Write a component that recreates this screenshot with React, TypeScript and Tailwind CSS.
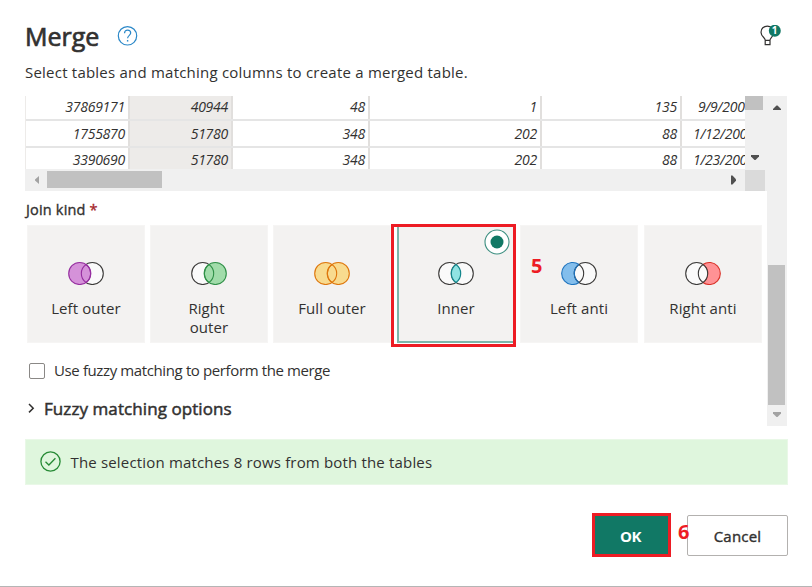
import React from "react";

type Kind = "left" | "right" | "full" | "inner" | "leftAnti" | "rightAnti";

const LENS = "M18 3.5 A11 11 0 0 1 18 21.5 A11 11 0 0 1 18 3.5 Z";
const LEFT_MOON = "M18 3.5 A11 11 0 1 0 18 21.5 A11 11 0 0 1 18 3.5 Z";
const RIGHT_MOON = "M18 3.5 A11 11 0 1 1 18 21.5 A11 11 0 0 0 18 3.5 Z";

function Ring({ x, fill, stroke }: { x: number; fill: string; stroke: string }) {
  return <circle cx={x} cy="12.5" r="11" fill={fill} stroke={stroke} strokeWidth="1.1" />;
}

function Venn({ kind }: { kind: Kind }) {
  const dark = "#3b3a39";
  const paper = "#fafafa";
  const a = 11.7;
  const b = 24.3;
  return (
    <svg width="37" height="24" viewBox="0 0 37 24" className="block">
      {kind === "left" && (
        <>
          <Ring x={b} fill={paper} stroke={dark} />
          <Ring x={a} fill="#d592d9" stroke="#962fa0" />
          <path d={LENS} fill="none" stroke="#962fa0" strokeWidth="1.1" />
        </>
      )}
      {kind === "right" && (
        <>
          <Ring x={a} fill={paper} stroke={dark} />
          <Ring x={b} fill="#a1dcaa" stroke="#309048" />
          <path d={LENS} fill="none" stroke="#309048" strokeWidth="1.1" />
        </>
      )}
      {kind === "full" && (
        <>
          <Ring x={a} fill="#f8db8f" stroke="#de770d" />
          <Ring x={b} fill="#f8db8f" stroke="#de770d" />
          <path d={LENS} fill="none" stroke="#de770d" strokeWidth="1.1" />
        </>
      )}
      {kind === "inner" && (
        <>
          <Ring x={a} fill={paper} stroke={dark} />
          <Ring x={b} fill={paper} stroke={dark} />
          <path d={LENS} fill="#90e3e2" stroke="#12868c" strokeWidth="1.2" />
        </>
      )}
      {kind === "leftAnti" && (
        <>
          <Ring x={b} fill={paper} stroke={dark} />
          <path d={LEFT_MOON} fill="#83beec" stroke="#1e74bf" strokeWidth="1.1" />
          <path d={LENS} fill={paper} stroke={dark} strokeWidth="1.1" />
          <path d="M18 3.5 A11 11 0 0 0 18 21.5" fill="none" stroke="#1e74bf" strokeWidth="1.1" />
        </>
      )}
      {kind === "rightAnti" && (
        <>
          <Ring x={a} fill={paper} stroke={dark} />
          <path d={RIGHT_MOON} fill="#ff9295" stroke="#d93027" strokeWidth="1.1" />
          <path d={LENS} fill={paper} stroke={dark} strokeWidth="1.1" />
        </>
      )}
    </svg>
  );
}

const COLS = "grid grid-cols-[104px_103px_137px_172px_140px_92px]";

const ROWS = [
  ["37869171", "40944", "48", "1", "135", "9/9/200"],
  ["1755870", "51780", "348", "202", "88", "1/12/200"],
  ["3390690", "51780", "348", "202", "88", "1/23/200"],
];

function PreviewTable() {
  return (
    <div className="h-[95px] w-[742px] shrink-0">
      <div className="flex h-[73px]">
        <div className="h-[73px] w-[720px] overflow-hidden border-l border-[#edebe9]">
          {ROWS.map((row, r) => (
            <div
              key={r}
              className={`${COLS} ${r === 0 ? "h-[25px]" : "h-[27px]"} border-b-2 border-[#e5e5e5] text-[14px] tracking-[-0.25px] italic leading-[22px]`}
            >
              {row.map((cell, c) => (
                <div
                  key={c}
                  className={
                    c === 5
                      ? `whitespace-nowrap ${r === 0 ? "pl-[16px]" : r === 1 ? "pl-[11px] pt-[2px]" : "pl-[11px] pt-px"}`
                      : `border-r-2 border-[#e1dfdd] pr-[3px] text-right ${r === 0 ? "" : r === 1 ? "pt-[2px]" : "pt-px"} ${c === 1 ? "bg-[#edebe9]" : ""}`
                  }
                >
                  {cell}
                </div>
              ))}
            </div>
          ))}
        </div>
        <div className="flex h-[73px] w-[22px] flex-col items-start justify-between bg-[#f0f0f0]">
          <div className="h-[14px] w-[18px] bg-[#c1c1c1]" />
          <svg width="20" height="22" viewBox="0 0 20 22">
            <path d="M6 8H14V9.5L10.5 13H9.5L6 9.5Z" fill="#505050" />
          </svg>
        </div>
      </div>
      <div className="flex h-[22px] items-center bg-[#f0f0f0]">
        <svg width="22" height="22" viewBox="0 0 22 22">
          <path d="M14 7V15L10 11.5V10.5Z" fill="#a3a3a3" />
        </svg>
        <div className="mb-px h-[17px] w-[115px] bg-[#c1c1c1]" />
        <svg width="583" height="22" viewBox="0 0 583 22">
          <path d="M569 6.5H570.5L574 10.3V11.7L570.5 15.5H569Z" fill="#505050" />
        </svg>
        <div className="h-[21px] w-[20px] bg-[#dadada]" />
      </div>
    </div>
  );
}

function Card({ kind, label, className = "" }: { kind: Kind; label: React.ReactNode; className?: string }) {
  return (
    <div className={`flex h-[118px] w-[118px] shrink-0 flex-col items-center border border-[#f6f5f4] bg-[#f3f2f1] pt-[35px] ${className}`}>
      <Venn kind={kind} />
      <div className="mt-[14px] text-center text-[15px] leading-[19px] tracking-[0.1px] whitespace-nowrap">{label}</div>
    </div>
  );
}

function Scrollbar() {
  return (
    <div className="flex h-[330px] w-[20px] flex-col items-center bg-[#f0f0f0]">
      <svg width="20" height="24" viewBox="0 0 20 24" className="shrink-0">
        <path d="M6 14V13L9.5 9.5H10.5L14 13V14Z" fill="#505050" />
      </svg>
      <div className="mt-[145px] mr-px h-[140px] w-[17px] bg-[#c1c1c1]" />
      <svg width="20" height="21" viewBox="0 0 20 21" className="shrink-0">
        <path d="M6 7H14V8.5L10.5 12H9.5L6 8.5Z" fill="#a3a3a3" />
      </svg>
    </div>
  );
}

export default function App() {
  return (
    <div className="relative flex h-[587px] w-[812px] flex-col overflow-hidden border-b border-[#b5b5b5] bg-white pl-[25px] font-['Open_Sans','Noto_Sans',sans-serif] text-[#323130]">
      <header className="h-[96px] w-[762px] shrink-0 pt-[18px]">
        <div className="flex h-[36px] items-center">
          <h1 className="w-[92px] text-[25px] leading-[35px] tracking-[0px] [-webkit-text-stroke:0.7px_#323130]">Merge</h1>
          <svg width="21" height="20" viewBox="0 0 21 20" fill="none" stroke="#2b88c8" strokeWidth="1.2">
            <circle cx="10.5" cy="9.8" r="9.2" />
            <path d="M7.5 7.2C7.5 5.2 8.8 4.2 10.6 4.2S13.7 5.3 13.7 7.1C13.7 9.3 10.6 9.5 10.6 12.3" />
            <path d="M9.9 14.8H11.3" strokeWidth="1.5" />
          </svg>
          <div className="relative ml-auto mr-[5px] h-[22px] w-[22px]">
            <svg width="22" height="22" viewBox="0 0 22 22" fill="none">
              <path d="M5.3 15.4C5.3 12.6 1 11.6 1 7.2C1 3.6 3.8 1.1 7.3 1.1S13.8 3.6 13.8 7.2C13.8 11.6 9.9 12.6 9.9 15.4M5.2 15.4H10V19.6H5.2Z" stroke="#323130" strokeWidth="1.2" />
              <circle cx="14.8" cy="5.8" r="6" fill="#117865" />
            </svg>
            <span className="absolute -top-px left-[9px] w-[11px] text-center text-[10px] leading-[13px] font-bold text-white">1</span>
          </div>
        </div>
        <p className="mt-[8px] text-[15px] leading-[21px] tracking-[0.22px] whitespace-nowrap">
          Select tables and matching columns to create a merged table.
        </p>
      </header>

      <main className="flex h-[330px] w-[762px] shrink-0">
        <div className="w-[742px]">
          <PreviewTable />
          <div className="mt-[8px] h-[22px] pl-px text-[14.5px] leading-[22px] tracking-[0.18px] [-webkit-text-stroke:0.35px]">
            Join kind <span className="text-[#a4262c]">*</span>
          </div>
          <div className="relative mt-[4px] flex h-[118px] pl-[2px]">
            <Card kind="left" label="Left outer" />
            <Card kind="right" label={<span className="mr-[5px] block">Right<br /><span className="ml-[5px]">outer</span></span>} className="ml-[5px]" />
            <Card kind="full" label="Full outer" className="ml-[5px]" />
            <div className="relative -mt-px h-[123px] w-[125px] shrink-0 border-[3px] border-[#ed1c24] bg-white pl-[3px]">
              <div className="flex h-[116px] w-[116px] flex-col items-center border-b-2 border-l-2 border-[#7db5aa] bg-[#f3f2f1] pt-[34px]">
                <Venn kind="inner" />
                <div className="mt-[14px] text-[15px] leading-[19px] tracking-[0.1px]">Inner</div>
              </div>
              <svg width="26" height="26" viewBox="0 0 26 26" className="absolute top-[2px] left-[90px]">
                <circle cx="13" cy="13" r="12" fill="#fff" stroke="#3c8f80" strokeWidth="1.1" />
                <circle cx="13" cy="13" r="6.5" fill="#117865" />
              </svg>
            </div>
            <Card kind="leftAnti" label="Left anti" className="ml-[4px]" />
            <Card kind="rightAnti" label="Right anti" className="ml-[6px]" />
            <span className="absolute top-[29px] left-[506px] text-[20px] leading-[24px] font-bold text-[#ed1c24]">5</span>
          </div>
          <label className="mt-[16px] flex h-[23px] items-center text-[15px] tracking-[-0.38px] whitespace-nowrap">
            <span className="mr-[9px] ml-[4px] h-[16px] w-[16px] rounded-[2px] border-[1.5px] border-[#8a8886] bg-white" />
            Use fuzzy matching to perform the merge
          </label>
          <div className="mt-[15px] flex h-[24px] items-center text-[17px] tracking-[0.08px] whitespace-nowrap [-webkit-text-stroke:0.5px_#323130]">
            <svg width="19" height="16" viewBox="0 0 19 16" fill="none" stroke="#323130" strokeWidth="1.5">
              <path d="M4 3L8.2 7.2L4 11.4" />
            </svg>
            Fuzzy matching options
          </div>
        </div>
        <Scrollbar />
      </main>

      <div className="mt-[13px] flex h-[46px] w-[763px] shrink-0 items-center border border-[#e9f8e7] bg-[#dff6dd] pl-[14px] text-[15px] tracking-[0.17px]">
        <svg width="21" height="21" viewBox="0 0 21 21" fill="none" stroke="#268a35" strokeWidth="1.3" className="mb-[2px]">
          <circle cx="10.5" cy="10.5" r="9.6" />
          <path d="M5.5 10.7L8.9 14L15.4 7.2" />
        </svg>
        <span className="ml-[9.5px] whitespace-nowrap">The selection matches 8 rows from both the tables</span>
      </div>

      <footer className="relative mt-[28px] ml-[567px] flex h-[44px] w-[196px] items-start text-[15px]">
        <button className="h-[44px] w-[79px] border-[3px] border-[#ed1c24] bg-[#117865] pt-[3px] pr-[2px] font-bold tracking-[-0.4px] text-white">OK</button>
        <button className="mt-[2px] ml-[16px] h-[41px] w-[101px] rounded-[2px] border-[1.5px] border-[#b3b1af] bg-white pt-px tracking-[0.2px] [-webkit-text-stroke:0.4px_#323130]">
          Cancel
        </button>
        <span className="absolute top-[7px] left-[86px] text-[20px] leading-[24px] font-bold text-[#ed1c24]">6</span>
      </footer>
    </div>
  );
}
